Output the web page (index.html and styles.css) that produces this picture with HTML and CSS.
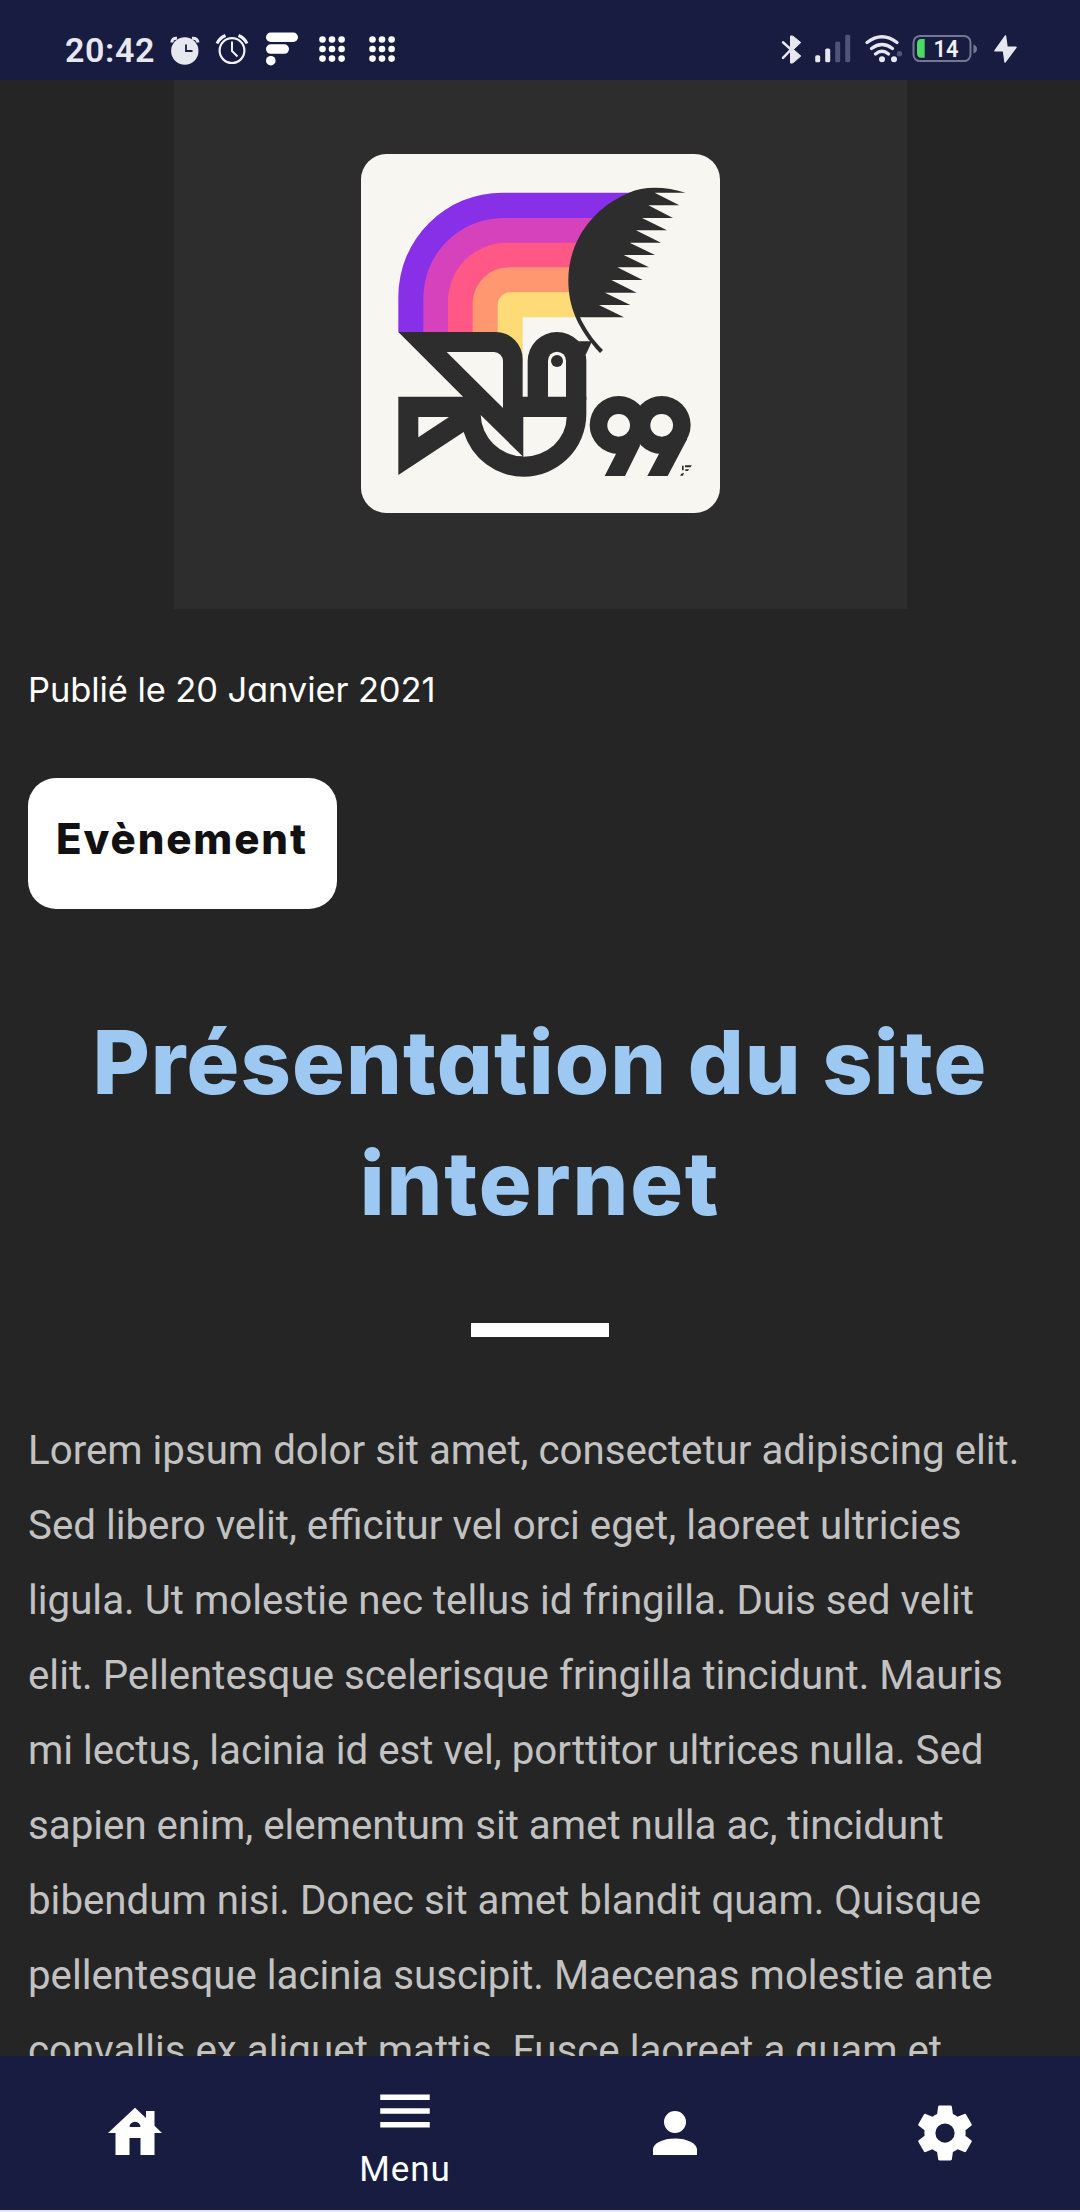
FILE: index.html
```html
<!DOCTYPE html>
<html lang="fr">
<head>
<meta charset="utf-8">
<title>Présentation du site internet</title>
<link rel="stylesheet" href="styles.css">
</head>
<body>
<div class="screen">
  <header class="status">
    <span class="time">20:42</span>
    <svg width="50" height="80" viewBox="160 0 50 80"><circle cx="184.8" cy="51" r="13.7" fill="#e6e7ef"/><path d="M171.800 42.500Q172 37.800 177 38.200M192 38.200Q197.500 37.800 198 42.500" fill="none" stroke="#e6e7ef" stroke-width="3"/><path d="M186 44.500V51H192.500" fill="none" stroke="#171c40" stroke-width="1.800"/></svg>
    <svg width="50" height="80" viewBox="210 0 50 80" fill="none" stroke="#f2f2f7"><circle cx="232" cy="50.600" r="12.400" stroke-width="2.200"/><path d="M217 43.500Q219.500 38 225.500 35.500M238.500 35.500Q244.500 38 247 43.500" stroke-width="3"/><path d="M232 41.500V51L237.500 56.500" stroke-width="2"/></svg>
    <svg width="50" height="80" viewBox="260 0 50 80" fill="#fff"><rect x="266" y="32.500" width="32" height="9.500" rx="4.700"/><rect x="266" y="44.300" width="23" height="9.500" rx="4.700"/><circle cx="270.800" cy="60.700" r="4.800"/></svg>
    <svg width="50" height="80" viewBox="310 0 50 80" fill="#fff"><g id="dots"><circle cx="322.500" cy="39.500" r="3.300"/><circle cx="332" cy="39.500" r="3.300"/><circle cx="341.600" cy="39.500" r="3.300"/><circle cx="322.500" cy="49" r="3.300"/><circle cx="332" cy="49" r="3.300"/><circle cx="341.600" cy="49" r="3.300"/><circle cx="322.500" cy="58.600" r="3.300"/><circle cx="332" cy="58.600" r="3.300"/><circle cx="341.600" cy="58.600" r="3.300"/></g></svg>
    <svg width="50" height="80" viewBox="310 0 50 80" fill="#fff"><use href="#dots"/></svg>
    <span class="spacer"></span>
    <svg width="35" height="80" viewBox="770 0 35 80"><path d="M790.500 36Q792.500 35.500 794 37L800.800 42.500L793.500 49.500L800.800 56L794 62Q792.500 63.500 790.500 63Z" fill="#e6e7ef" stroke="#e6e7ef" stroke-linejoin="round"/><path d="M783 42.300L791 49.500L783 57.800" fill="none" stroke="#e6e7ef" stroke-width="2.500" stroke-linecap="round"/></svg>
    <svg width="55" height="80" viewBox="805 0 55 80" fill="#e6e7ef"><rect x="815.200" y="55.300" width="5" height="7" rx="1.500"/><rect x="825.200" y="48.500" width="5" height="13.800" rx="1.500"/><g fill="#50537a"><rect x="835.200" y="41.500" width="5" height="20.800" rx="1.500"/><rect x="845.200" y="34.700" width="5" height="27.600" rx="1.500"/></g></svg>
    <svg width="48" height="80" viewBox="860 0 48 80"><g fill="none" stroke="#e6e7ef" stroke-width="3.300" stroke-linecap="round"><path d="M867 42.500Q882 31 897 42.500M871.500 48.500Q882 40.500 892.500 48.500M875.500 54Q882 48.500 888.500 54"/></g><circle cx="882" cy="59.300" r="3" fill="#e6e7ef"/><circle cx="894" cy="59.300" r="3" fill="#e6e7ef"/><circle cx="899.500" cy="53.700" r="2.700" fill="#50537a"/></svg>
    <svg width="74" height="80" viewBox="908 0 74 80"><rect x="913.500" y="35.900" width="57" height="25.200" rx="6.500" fill="none" stroke="#747793" stroke-width="2"/><path d="M973.500 44.500Q977 46 977 49T973.500 53.500Z" fill="#747793"/><path d="M924.700 39V57.700H921Q917 57.700 917 53V43.700Q917 39 921 39Z" fill="#4cd964"/><text x="933.500" y="57" textLength="25" lengthAdjust="spacingAndGlyphs" class="battery-level">14</text></svg>
    <svg width="98" height="80" viewBox="982 0 98 80"><path d="M1005.500 36L995 50.800H1003.500L1005 62L1016 47.300H1007Z" fill="#e6e7ef" stroke="#e6e7ef" stroke-width="1.500" stroke-linejoin="round"/></svg>
  </header>

  <main class="article">
    <div class="hero">
      <svg class="logo" viewBox="31 42 1077 1077">
        <rect x="31" y="42" width="1077" height="1077" rx="76" fill="#f7f6f1"/>
        <path d="M143 576V470A312 312 0 0 1 455 158H840L700 520H510V576Z" fill="#8730e8"/>
        <path d="M218 576V474A240 240 0 0 1 458 234H740L690 520H510V576Z" fill="#d542bb"/>
        <path d="M292 576V484A176 176 0 0 1 468 308H690V520H510V576Z" fill="#ff5886"/>
        <path d="M366 576V490A108 108 0 0 1 474 382H670V520H510V576Z" fill="#ff9771"/>
        <path d="M441 576V495A38 38 0 0 1 479 457H670L685 532H516V655H441Z" fill="#ffdb78"/>
        <g fill="#2d2d2d">
          <path d="M1005 158C950 140 880 136 835 158C720 206 653 310 653 420C653 500 680 565 748 639L757 630C730 605 700 560 688 532H820L745 495H839L763 458H858L782 420H876L800 382H895L819 345H913L837 308H931L856 271H949L874 234H967L893 196H986L912 158Z"/>
          <path d="M680 604H724L705 645Z"/>
          <path d="M143 576H435A81 81 0 0 1 516 657V949Z"/>
          <path d="M143 770H707V822A188 188 0 0 1 519 1010A188 188 0 0 1 339 876L143 1005Z"/>
          <path d="M531 780V664A88 88 0 0 1 707 664V780Z"/>
          <circle cx="804" cy="855" r="87"/><circle cx="933" cy="855" r="87"/>
          <path d="M797 940L762 1008H823L868 917L850 890ZM926 940L890 1008H951L1010 896L960 880Z"/>
          <path d="M1003 976H1023L1020 982H1003ZM994 977H999V991H994ZM1004 988H1015L1012 993H1004ZM992 1001L1000 998L997 1007H988Z"/>
        </g>
        <g fill="#f7f6f1">
          <path d="M288 636H430A27 27 0 0 1 457 663V804Z"/>
          <path d="M203 831H295L203 892Z"/>
          <path d="M390 825L516 949A129 129 0 0 1 390 825Z"/>
          <path d="M518 831H648A129 120 0 0 1 518 950Z"/>
          <path d="M592 770V662A27 27 0 0 1 646 662V770Z"/>
          <circle cx="804" cy="856" r="34"/><circle cx="933" cy="856" r="34"/>
        </g>
        <circle cx="619" cy="663" r="18" fill="#2d2d2d"/>
      </svg>
    </div>
    <p class="date">Publié le 20 Janvier 2021</p>
    <span class="badge">Evènement</span>
    <h1 class="title"><span class="line-a">Présentation du site</span><br><span class="line-b">internet</span></h1>
    <div class="rule"></div>
    <p class="body">Lorem ipsum dolor sit amet, consectetur adipiscing elit.<br>Sed libero velit, efficitur vel orci eget, laoreet ultricies<br>ligula. Ut molestie nec tellus id fringilla. Duis sed velit<br>elit. Pellentesque scelerisque fringilla tincidunt. Mauris<br>mi lectus, lacinia id est vel, porttitor ultrices nulla. Sed<br>sapien enim, elementum sit amet nulla ac, tincidunt<br>bibendum nisi. Donec sit amet blandit quam. Quisque<br>pellentesque lacinia suscipit. Maecenas molestie ante<br>convallis ex aliquet mattis. Fusce laoreet a quam et</p>
  </main>

  <nav class="tabs">
    <a class="tab"><svg width="66" height="66" viewBox="102 2100 66 66"><path fill="#fff" fill-rule="evenodd" d="M135 2107.800L146 2118V2111H154.500V2125.700L162 2133H154.500V2155H140.500V2138H129.500V2155H115.500V2133H108ZM129.500 2127H140.500A5.500 5.300 0 0 0 129.500 2127Z"/></svg></a>
    <a class="tab tab-menu"><svg width="66" height="66" viewBox="0 0 24 24"><path fill="#fff" d="M3 6h18v2H3zM3 11h18v2H3zM3 16h18v2H3z"/></svg><span class="label">Menu</span></a>
    <a class="tab"><svg width="66" height="66" viewBox="0 0 24 24"><path fill="#fff" d="M12 4a4 4 0 0 1 4 4 4 4 0 0 1-4 4 4 4 0 0 1-4-4 4 4 0 0 1 4-4m0 10c4.420 0 8 1.790 8 4v2H4v-2c0-2.210 3.580-4 8-4z"/></svg></a>
    <a class="tab"><svg width="66" height="66" viewBox="0 0 24 24"><path fill="#fff" d="M12 15.500A3.500 3.500 0 0 1 8.500 12 3.500 3.500 0 0 1 12 8.500a3.500 3.500 0 0 1 3.500 3.500 3.500 3.500 0 0 1-3.500 3.500m7.430-2.530c.04-.32.070-.64.070-.97 0-.33-.03-.66-.07-1l2.110-1.630c.19-.15.240-.42.120-.64l-2-3.460c-.12-.22-.39-.31-.61-.22l-2.490 1c-.52-.39-1.060-.73-1.690-.98l-.37-2.650A.506.506 0 0 0 14 2h-4c-.25 0-.46.18-.5.420l-.37 2.650c-.63.250-1.170.59-1.690.98l-2.490-1c-.22-.09-.49 0-.61.220l-2 3.460c-.13.220-.07.490.120.640L4.570 11c-.04.340-.07.670-.07 1 0 .330.030.650.070.970l-2.110 1.660c-.19.150-.25.420-.12.640l2 3.460c.12.220.390.300.610.220l2.490-1.010c.52.400 1.060.740 1.690.990l.37 2.650c.04.240.250.420.5.420h4c.25 0 .46-.18.5-.42l.37-2.650c.63-.26 1.170-.59 1.690-.99l2.490 1.010c.22.080.49 0 .61-.22l2-3.460c.12-.22.070-.49-.12-.64l-2.110-1.660z"/></svg></a>
  </nav>
</div>
</body>
</html>
```
FILE: styles.css
```css
* { box-sizing: border-box; }
body { margin: 0; background: #252525; font-family: Roboto, sans-serif; }
svg { display: block; flex: none; }
.screen { display: flex; flex-direction: column; width: 1080px; height: 2212px; overflow: hidden; }
.status { display: flex; flex: none; height: 80px; background: #171c40; }
.time { width: 160px; padding-left: 65px; line-height: 100px; font-size: 34px; font-weight: 600; color: #e6e7ef; letter-spacing: 0.6px; }
.spacer { flex: 1; }
.battery-level { font: 600 24.500px Roboto, sans-serif; fill: #f0f0f5; }
.article { flex: 1; min-height: 0; overflow: hidden; padding: 0 28px; background: #252525; }
.hero { width: 733px; height: 529px; margin: 0 auto; padding-top: 74px; background: #2d2d2d; }
.logo { width: 359px; height: 359px; margin: 0 auto; }
.date { margin: 54px 0 0; height: 54px; line-height: 54px; font-family: Inter, sans-serif; font-size: 34.500px; letter-spacing: -0.1px; font-feature-settings: "cv11"; color: #fff; white-space: nowrap; }
.badge { display: block; width: 309px; height: 131px; margin-top: 61px; padding-left: 28px; border-radius: 28px; background: #fff; line-height: 122px; font-family: Inter, sans-serif; font-size: 42px; font-weight: 800; letter-spacing: 1.900px; color: #111; white-space: nowrap; }
.title { margin: 93px 0 0; height: 242px; line-height: 121px; text-align: center; font-family: Inter, sans-serif; font-size: 88px; font-weight: 800; font-feature-settings: "cv11"; color: #9dc8f1; white-space: nowrap; }
.line-a { letter-spacing: 1.100px; }
.line-b { letter-spacing: 1.800px; }
.rule { width: 138px; height: 14px; margin: 79px auto 0; background: #fff; }
.body { margin: 76px 0 0; line-height: 75px; font-size: 40.250px; color: #c2c2c2; white-space: nowrap; }
.tabs { display: grid; grid-template-columns: repeat(4, 1fr); flex: none; height: 156px; background: #171c40; border-bottom: 2px solid #e4e5ec; }
.tab { display: flex; flex-direction: column; align-items: center; justify-content: center; }
.tab-menu { justify-content: flex-start; padding-top: 22px; }
.label { margin-top: 5px; line-height: 42px; font-size: 35px; letter-spacing: 1px; color: #fff; }
```
